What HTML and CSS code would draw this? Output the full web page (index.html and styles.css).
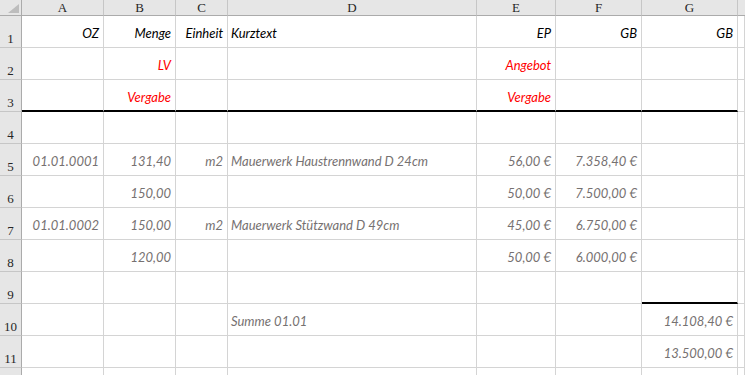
FILE: index.html
```html
<!DOCTYPE html>
<html>
<head>
<meta name="viewport" content="width=device-width, initial-scale=1">
<link rel="stylesheet" href="styles.css">
</head>
<body>

<div class="sheet">
  <!-- column headers -->
  <div class="corner"><svg width="11" height="9" viewBox="0 0 11 9"><polygon points="0,9 11,9 11,0" fill="#bdbdbd"/></svg></div>
  <div class="colhd">A</div>
  <div class="colhd">B</div>
  <div class="colhd">C</div>
  <div class="colhd">D</div>
  <div class="colhd">E</div>
  <div class="colhd">F</div>
  <div class="colhd">G</div>
  <div class="colhd last"></div>

  <!-- 1 -->
  <div class="rowhd">1</div>
  <div class="c r">OZ</div>
  <div class="c r">Menge</div>
  <div class="c r">Einheit</div>
  <div class="c">Kurztext</div>
  <div class="c r">EP</div>
  <div class="c r">GB</div>
  <div class="c r">GB</div>
  <div class="c"></div>

  <!-- 2 -->
  <div class="rowhd">2</div>
  <div class="c"></div>
  <div class="c r red">LV</div>
  <div class="c"></div>
  <div class="c"></div>
  <div class="c r red">Angebot</div>
  <div class="c"></div>
  <div class="c"></div>
  <div class="c"></div>

  <!-- 3 -->
  <div class="rowhd">3</div>
  <div class="c thick"></div>
  <div class="c r red thick">Vergabe</div>
  <div class="c thick"></div>
  <div class="c thick"></div>
  <div class="c r red thick">Vergabe</div>
  <div class="c thick"></div>
  <div class="c thick"></div>
  <div class="c"></div>

  <!-- 4 -->
  <div class="rowhd">4</div>
  <div class="c"></div>
  <div class="c"></div>
  <div class="c"></div>
  <div class="c"></div>
  <div class="c"></div>
  <div class="c"></div>
  <div class="c"></div>
  <div class="c"></div>

  <!-- 5 -->
  <div class="rowhd">5</div>
  <div class="c r gray">01.01.0001</div>
  <div class="c r gray">131,40</div>
  <div class="c r gray">m2</div>
  <div class="c gray">Mauerwerk Haustrennwand D 24cm</div>
  <div class="c r gray">56,00 €</div>
  <div class="c r gray">7.358,40 €</div>
  <div class="c"></div>
  <div class="c"></div>

  <!-- 6 -->
  <div class="rowhd">6</div>
  <div class="c"></div>
  <div class="c r gray">150,00</div>
  <div class="c"></div>
  <div class="c"></div>
  <div class="c r gray">50,00 €</div>
  <div class="c r gray">7.500,00 €</div>
  <div class="c"></div>
  <div class="c"></div>

  <!-- 7 -->
  <div class="rowhd">7</div>
  <div class="c r gray">01.01.0002</div>
  <div class="c r gray">150,00</div>
  <div class="c r gray">m2</div>
  <div class="c gray">Mauerwerk Stützwand D 49cm</div>
  <div class="c r gray">45,00 €</div>
  <div class="c r gray">6.750,00 €</div>
  <div class="c"></div>
  <div class="c"></div>

  <!-- 8 -->
  <div class="rowhd">8</div>
  <div class="c"></div>
  <div class="c r gray">120,00</div>
  <div class="c"></div>
  <div class="c"></div>
  <div class="c r gray">50,00 €</div>
  <div class="c r gray">6.000,00 €</div>
  <div class="c"></div>
  <div class="c"></div>

  <!-- 9 -->
  <div class="rowhd">9</div>
  <div class="c"></div>
  <div class="c"></div>
  <div class="c"></div>
  <div class="c"></div>
  <div class="c"></div>
  <div class="c"></div>
  <div class="c thick"></div>
  <div class="c"></div>

  <!-- 10 -->
  <div class="rowhd">10</div>
  <div class="c"></div>
  <div class="c"></div>
  <div class="c"></div>
  <div class="c gray">Summe 01.01</div>
  <div class="c"></div>
  <div class="c"></div>
  <div class="c r gray">14.108,40 €</div>
  <div class="c"></div>

  <!-- 11 -->
  <div class="rowhd">11</div>
  <div class="c"></div>
  <div class="c"></div>
  <div class="c"></div>
  <div class="c"></div>
  <div class="c"></div>
  <div class="c"></div>
  <div class="c r gray">13.500,00 €</div>
  <div class="c"></div>

  <!-- next row, scrolled mostly out of view -->
  <div class="rowhd"></div>
  <div class="c"></div>
  <div class="c"></div>
  <div class="c"></div>
  <div class="c"></div>
  <div class="c"></div>
  <div class="c"></div>
  <div class="c"></div>
  <div class="c"></div>
</div>

</body>
</html>
```

FILE: styles.css
```css
body {
  margin: 0;
  background: white;
  overflow: hidden;
}

* {
  box-sizing: border-box;
}

/* The spreadsheet: row header column + columns A..G + a sliver of H */
.sheet {
  display: grid;
  grid-template-columns: 22px 82px 72px 52px 249px 79px 86px 96px 1fr;
  grid-template-rows: 16px;
  grid-auto-rows: 32px;
  width: 745px;
}

/* Top-left select-all box */
.corner {
  background: #e6e6e6;
  border-right: 1px solid #ababab;
  border-bottom: 1px solid #ababab;
  display: flex;
  justify-content: flex-end;
  align-items: flex-end;
  padding: 0 2px 2px 0;
}
.corner svg {
  display: block;
}

/* Column letters */
.colhd {
  background: #e6e6e6;
  border-right: 1px solid #c6c6c6;
  border-bottom: 1px solid #ababab;
  font-family: "Liberation Serif", serif;
  font-size: 13px;
  line-height: 15px;
  color: #262626;
  text-align: center;
}
.colhd.last {
  border-right: none;
}

/* Row numbers */
.rowhd {
  background: #e6e6e6;
  border-right: 1px solid #ababab;
  border-bottom: 1px solid #c6c6c6;
  font-family: "Liberation Serif", serif;
  font-size: 13px;
  line-height: 16px;
  color: #262626;
  display: flex;
  justify-content: center;
  align-items: flex-end;
}

/* Normal cell */
.c {
  border-right: 1px solid #d4d4d4;
  border-bottom: 1px solid #d4d4d4;
  font-family: "Lato", sans-serif;
  font-style: italic;
  font-size: 13px;
  line-height: 16px;
  color: #000;
  display: flex;
  align-items: flex-end;
  padding: 0 3px 6px 3px;
  white-space: nowrap;
}

.r {
  justify-content: flex-end;
  padding-right: 4px;
}

.red {
  color: #ff0000;
}

.gray {
  color: #767171;
}

/* Thick bottom rule */
.thick {
  border-bottom: 2px solid #000;
  padding-bottom: 5px;
}
```
